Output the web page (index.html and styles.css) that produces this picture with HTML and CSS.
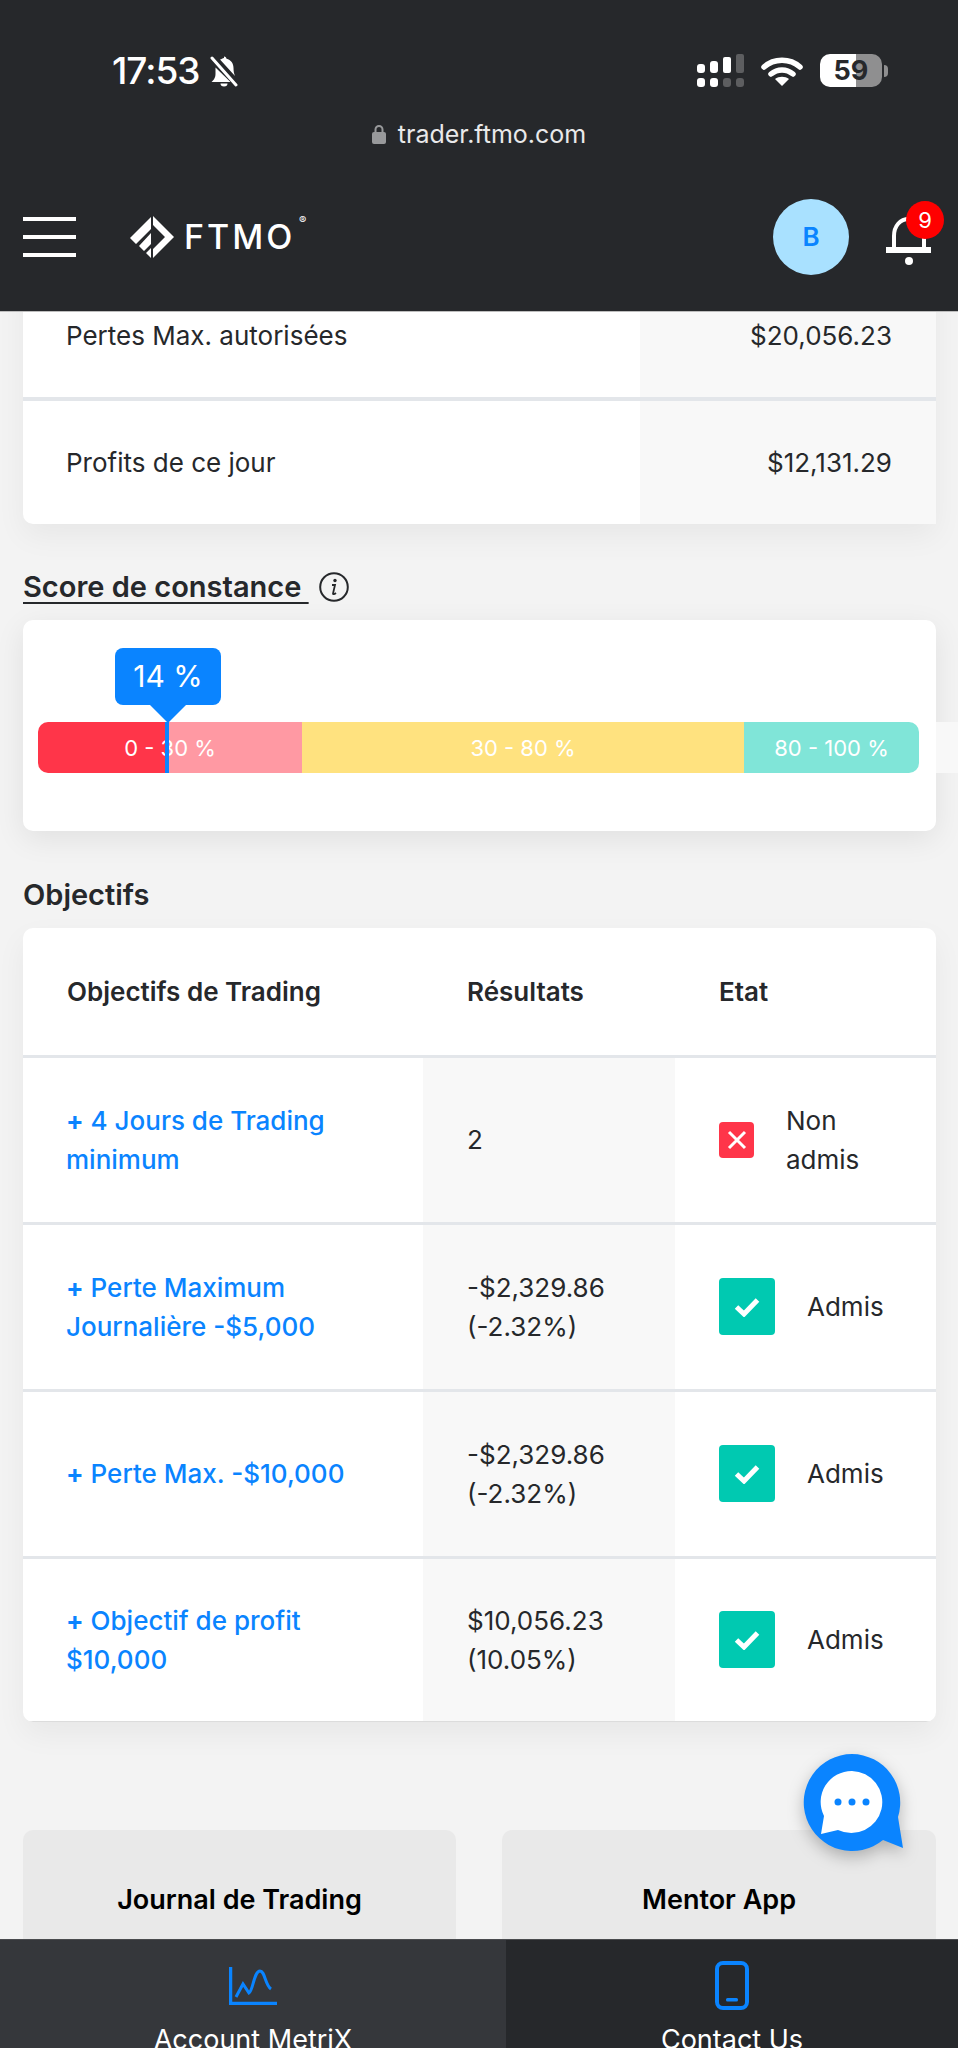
FILE: index.html
```html
<!DOCTYPE html>
<html>
<head>
  <title>FTMO Trader</title>
  <link rel="stylesheet" href="styles.css">
</head>
<body>
  <div class="page">
    <header class="top">
      <div class="status-bar">
        <div class="status-left">
          <span class="clock">17:53</span>
          <svg class="bell-off" viewBox="0 0 32 32" width="32" height="32">
            <path d="M15 1.5c1.5 0 2.5 1 2.5 2.3 4.5 1 7 4.600 7 9.200 0 3 .5 6 1.500 8l-15-16.500C12.500 4.500 13.500 3 15 3zM6.500 12.500 21.500 27H2.500c1.500-1.500 4-3.500 4-8z" fill="#fff"/>
            <path d="M11.500 28.500h7a3.500 3 0 0 1-7 0z" fill="#fff"/>
            <path d="M3 3l24 27" stroke="#fff" stroke-width="3" stroke-linecap="round"/>
          </svg>
        </div>
        <div class="status-right">
          <svg viewBox="0 0 47 33" width="47" height="33">
            <rect x="0" y="10" width="8" height="9" rx="3" fill="#fff"/>
            <rect x="13" y="7" width="8" height="12" rx="3" fill="#fff"/>
            <rect x="26" y="3" width="8" height="16" rx="2" fill="#fff"/>
            <rect x="39" y="0" width="8" height="19" rx="2" fill="#5d5e60"/>
            <rect x="0" y="24" width="8" height="9" rx="3" fill="#fff"/>
            <rect x="13" y="24" width="8" height="9" rx="3" fill="#fff"/>
            <rect x="26" y="24" width="8" height="9" rx="3" fill="#5d5e60"/>
            <rect x="39" y="24" width="8" height="9" rx="3" fill="#5d5e60"/>
          </svg>
          <svg class="wifi" viewBox="0 0 42 30" width="42" height="30">
            <path d="M3 11C13 2 29 2 39 11" fill="none" stroke="#fff" stroke-width="5.500" stroke-linecap="round"/>
            <path d="M10 18c6.500-5.500 15.500-5.500 22 0" fill="none" stroke="#fff" stroke-width="5.500" stroke-linecap="round"/>
            <path d="M21 30l-7-7c4-3 10-3 14 0z" fill="#fff"/>
          </svg>
          <div class="battery">
            <span class="battery-fill">59</span>
          </div>
          <span class="battery-tip"></span>
        </div>
      </div>
      <div class="url-bar">
        <svg viewBox="0 0 14 20" width="14" height="20">
          <path d="M3.500 9V5.500a3.500 3.500 0 0 1 7 0V9" fill="none" stroke="#98999b" stroke-width="2"/>
          <rect x="0" y="8" width="14" height="12" rx="2" fill="#98999b"/>
        </svg>
        <span>trader.ftmo.com</span>
      </div>
      <nav class="nav">
        <div class="nav-left">
          <div class="burger"><span></span><span></span><span></span></div>
          <div class="logo">
            <svg viewBox="0 0 44 42" width="44" height="42">
              <path d="M23 0 44 21 23 42V33L35 21 23 9z" fill="#fff"/>
              <path d="M21 1 0 22l6 6L21 13zM21 17 9 30l5 5 7-7zM21 32l-5 5 5 5z" fill="#fff"/>
            </svg>
            <span class="logo-text">FTMO</span>
            <span class="logo-reg">®</span>
          </div>
        </div>
        <div class="nav-right">
          <div class="avatar">B</div>
          <div class="bell">
            <svg viewBox="0 0 46 52" width="46" height="52">
              <path d="M8 34V22C8 12 14 5 23 5s15 7 15 17v12" fill="none" stroke="#fff" stroke-width="4"/>
              <rect x="0" y="33" width="45" height="6" fill="#fff"/>
              <circle cx="23" cy="47" r="4" fill="#fff"/>
            </svg>
            <span class="badge">9</span>
          </div>
        </div>
      </nav>
    </header>

    <main class="content">
      <table class="card stats-table">
        <tr>
          <td>Pertes Max. autorisées</td>
          <td class="shade amount">$20,056.23</td>
        </tr>
        <tr>
          <td>Profits de ce jour</td>
          <td class="shade amount">$12,131.29</td>
        </tr>
      </table>

      <h2 class="title title-score">
        <span class="underlined">Score de constance&nbsp;</span>
        <svg viewBox="0 0 30 30" width="30" height="30">
          <circle cx="15" cy="15" r="13.800" fill="none" stroke="#26282b" stroke-width="2"/>
          <circle cx="16" cy="8.500" r="1.700" fill="#26282b"/>
          <path d="M13 13h3l-2 8.500c0 1 1 1 3-.5" fill="none" stroke="#26282b" stroke-width="1.800"/>
        </svg>
      </h2>

      <section class="score-card">
        <div class="score-bar">
          <div class="seg seg-red">0 - 30 %</div>
          <div class="seg seg-yellow">30 - 80 %</div>
          <div class="seg seg-teal">80 - 100 %</div>
          <div class="marker"></div>
          <div class="score-tip">14 %</div>
        </div>
      </section>

      <h2 class="title title-goals">Objectifs</h2>

      <table class="card goals-table">
        <colgroup>
          <col class="col-goal">
          <col class="col-result">
          <col class="col-state">
        </colgroup>
        <tr class="head-row">
          <th>Objectifs de Trading</th>
          <th>Résultats</th>
          <th>Etat</th>
        </tr>
        <tr>
          <td class="goal"><b>+</b> 4 Jours de Trading<br>minimum</td>
          <td class="shade">2</td>
          <td>
            <div class="state state-no">
              <span class="state-box box-no">
                <svg viewBox="0 0 20 20" width="20" height="20"><path d="M2 2l16 16M18 2 2 18" stroke="#fff" stroke-width="3"/></svg>
              </span>
              <span>Non<br>admis</span>
            </div>
          </td>
        </tr>
        <tr>
          <td class="goal"><b>+</b> Perte Maximum<br>Journalière -$5,000</td>
          <td class="shade">-$2,329.86<br>(-2.32%)</td>
          <td>
            <div class="state">
              <span class="state-box box-ok">
                <svg viewBox="0 0 26 20" width="26" height="20"><path d="M2.500 10l7.500 7L23.500 3" fill="none" stroke="#fff" stroke-width="5"/></svg>
              </span>
              <span>Admis</span>
            </div>
          </td>
        </tr>
        <tr>
          <td class="goal"><b>+</b> Perte Max. -$10,000</td>
          <td class="shade">-$2,329.86<br>(-2.32%)</td>
          <td>
            <div class="state">
              <span class="state-box box-ok">
                <svg viewBox="0 0 26 20" width="26" height="20"><path d="M2.500 10l7.500 7L23.500 3" fill="none" stroke="#fff" stroke-width="5"/></svg>
              </span>
              <span>Admis</span>
            </div>
          </td>
        </tr>
        <tr>
          <td class="goal"><b>+</b> Objectif de profit<br>$10,000</td>
          <td class="shade">$10,056.23<br>(10.05%)</td>
          <td>
            <div class="state">
              <span class="state-box box-ok">
                <svg viewBox="0 0 26 20" width="26" height="20"><path d="M2.500 10l7.500 7L23.500 3" fill="none" stroke="#fff" stroke-width="5"/></svg>
              </span>
              <span>Admis</span>
            </div>
          </td>
        </tr>
      </table>

      <div class="links">
        <div class="link-card">Journal de Trading</div>
        <div class="link-card">Mentor App</div>
      </div>
    </main>

    <footer class="tabs">
      <div class="tab tab-active">
        <svg viewBox="0 0 48 38" width="48" height="38">
          <path d="M1.500 0v36.500H48" fill="none" stroke="#0a84ff" stroke-width="3.500"/>
          <path d="M7 30 14 17l6 9C24 24 25 4 31 4c5 0 5 14 11 18" fill="none" stroke="#0a84ff" stroke-width="3"/>
        </svg>
        <span>Account MetriX</span>
      </div>
      <div class="tab">
        <svg viewBox="0 0 34 49" width="34" height="49">
          <rect x="2" y="2" width="30" height="45" rx="6" fill="none" stroke="#0a84ff" stroke-width="4"/>
          <rect x="11" y="37" width="12" height="3.500" rx="1.500" fill="#0a84ff"/>
        </svg>
        <span>Contact Us</span>
      </div>
    </footer>

    <div class="chat-btn">
      <svg viewBox="0 0 100 100" width="100" height="100">
        <path d="M49 2a48.500 48.500 0 0 1 46 63l5 31-20-8A48.500 48.500 0 1 1 49 2z" fill="#0a84ff"/>
        <path d="M49 19a31 31 0 1 1-14 59l-17 4 3-18A31 31 0 0 1 49 19z" fill="#fff"/>
        <circle cx="35" cy="50" r="3.500" fill="#0a84ff"/>
        <circle cx="49" cy="50" r="3.500" fill="#0a84ff"/>
        <circle cx="63" cy="50" r="3.500" fill="#0a84ff"/>
      </svg>
    </div>
  </div>
</body>
</html>
```

FILE: styles.css
```css
* {
  box-sizing: border-box;
}

body {
  margin: 0;
  font-family: Inter, "Liberation Sans", sans-serif;
  color: #26282b;
  background: #f3f3f3;
}

.page {
  position: relative;
  width: 958px;
  height: 2048px;
  overflow: hidden;
  display: flex;
  flex-direction: column;
}

/* top dark area */
.top {
  flex: none;
  height: 312px;
  background: #26282b;
  color: #fff;
  border-bottom: 1px solid #bdbdbd;
}

.status-bar {
  height: 106px;
  padding: 54px 70px 0 112px;
  display: flex;
  justify-content: space-between;
  align-items: flex-start;
}

.status-left {
  display: flex;
  align-items: center;
  gap: 9px;
}

.clock {
  font-size: 37px;
  font-weight: 500;
  line-height: 34px;
  letter-spacing: -1px;
}

.status-right {
  display: flex;
  align-items: center;
}

.wifi {
  margin-left: 17px;
}

.battery {
  margin-left: 17px;
  width: 62px;
  height: 33px;
  border-radius: 10px;
  overflow: hidden;
  background: linear-gradient(to right, #fff 58%, #8f8f90 58%);
}

.battery-fill {
  display: block;
  text-align: center;
  font-size: 27px;
  font-weight: 700;
  line-height: 33px;
  color: #26282b;
}

.battery-tip {
  width: 4px;
  height: 12px;
  margin-left: 2px;
  border-radius: 0 4px 4px 0;
  background: #8f8f90;
}

.url-bar {
  height: 56px;
  display: flex;
  align-items: center;
  justify-content: center;
  gap: 12px;
  padding-right: 0;
  font-size: 25px;
  color: #e9e9ea;
}

.nav {
  height: 149px;
  padding: 0 14px 0 23px;
  display: flex;
  justify-content: space-between;
  align-items: center;
}

.nav-left {
  display: flex;
  align-items: center;
  gap: 54px;
}

.burger {
  width: 53px;
  display: flex;
  flex-direction: column;
  gap: 14px;
}

.burger span {
  height: 4px;
  background: #fff;
}

.logo {
  display: flex;
  align-items: center;
  position: relative;
}

.logo-text {
  margin-left: 10px;
  font-size: 34px;
  font-weight: 500;
  letter-spacing: 3px;
}

.logo-reg {
  position: absolute;
  right: -11px;
  top: -3px;
  font-size: 11px;
}

.nav-right {
  display: flex;
  align-items: center;
  gap: 37px;
}

.avatar {
  width: 76px;
  height: 76px;
  border-radius: 50%;
  background: #a9e1ff;
  color: #0a84ff;
  font-size: 26px;
  font-weight: 600;
  display: flex;
  align-items: center;
  justify-content: center;
}

.bell {
  position: relative;
  width: 46px;
  height: 52px;
  margin-right: 12px;
  margin-top: 6px;
}

.badge {
  position: absolute;
  right: -12px;
  top: -13px;
  width: 38px;
  height: 38px;
  border-radius: 50%;
  background: #f00;
  color: #fff;
  font-size: 22px;
  text-align: center;
  line-height: 38px;
}

/* scrolled content */
.content {
  flex: 1;
  min-height: 0;
  overflow: hidden;
  padding: 0 22px 0 23px;
  position: relative;
}

.card {
  width: 100%;
  background: #fff;
  border-collapse: collapse;
  table-layout: fixed;
  box-shadow: 0 12px 30px rgba(0, 0, 0, 0.05);
  border-radius: 0 0 0 10px;
  overflow: hidden;
}

.shade {
  background: #f8f8f8;
}

.stats-table {
  margin-top: -38px;
}

.stats-table td {
  height: 125px;
  padding: 0 44px 0 43px;
  font-size: 26px;
  border-bottom: 4px solid #e3e6ea;
}

.stats-table tr:last-child td {
  border-bottom: 0;
}

.stats-table td:first-child {
  width: 617px;
}

.amount {
  text-align: right;
}

.title {
  margin: 0;
  height: 40px;
  font-size: 29px;
  font-weight: 600;
  line-height: 40px;
}

.title-score {
  margin-top: 43px;
  margin-bottom: 13px;
  display: flex;
  align-items: center;
  gap: 10px;
}

.underlined {
  text-decoration: underline;
  text-underline-offset: 5px;
  text-decoration-thickness: 2px;
}

.score-card {
  height: 211px;
  background: #fff;
  border-radius: 10px;
  padding: 102px 16px 0 15px;
  box-shadow: 0 8px 30px rgba(0, 0, 0, 0.08);
}

.score-bar {
  position: relative;
  height: 51px;
  border-radius: 10px;
  display: flex;
  color: #fff;
  font-size: 22px;
}

/* the grey strip that runs out of the card on the right */
.score-bar::after {
  content: "";
  position: absolute;
  left: 100%;
  top: 0;
  width: 100px;
  height: 100%;
  margin-left: 16px;
  background: #f8f8f8;
}

.seg {
  display: flex;
  align-items: center;
  justify-content: center;
}

.seg-red {
  width: 264px;
  border-radius: 10px 0 0 10px;
  background: linear-gradient(to right, #ff3549 49%, #ff99a3 49%);
}

.seg-yellow {
  width: 442px;
  background: #ffe27f;
}

.seg-teal {
  width: 175px;
  border-radius: 0 10px 10px 0;
  background: #80e5d8;
}

.marker {
  position: absolute;
  left: 127px;
  top: 0;
  bottom: 0;
  width: 4px;
  background: #0a84ff;
}

.score-tip {
  position: absolute;
  left: 77px;
  top: -74px;
  width: 106px;
  height: 57px;
  border-radius: 8px;
  background: #0a84ff;
  font-size: 30px;
  line-height: 57px;
  text-align: center;
}

.score-tip::after {
  content: "";
  position: absolute;
  left: 35px;
  top: 100%;
  border-top: 18px solid #0a84ff;
  border-left: 18px solid transparent;
  border-right: 18px solid transparent;
}

.title-goals {
  margin-top: 44px;
  margin-bottom: 13px;
}

.goals-table {
  border-radius: 10px;
}

.col-goal {
  width: 400px;
}

.col-result {
  width: 252px;
}

.goals-table th {
  height: 128px;
  padding: 0 0 0 44px;
  font-size: 26px;
  font-weight: 600;
  text-align: left;
  border-bottom: 3px solid #e3e6ea;
}

.goals-table td {
  height: 167px;
  padding: 0 0 0 44px;
  font-size: 26px;
  line-height: 39px;
  border-bottom: 3px solid #e3e6ea;
}

.goals-table tr:last-child td {
  height: 164px;
  border-bottom: 1px solid #dcdcdc;
}

.goals-table .goal {
  padding-left: 43px;
  color: #0a84ff;
  font-weight: 500;
}

.state {
  display: flex;
  align-items: center;
  gap: 32px;
}

.state-no {
  gap: 32px;
}

.state-box {
  flex: none;
  width: 56px;
  height: 57px;
  border-radius: 4px;
  display: flex;
  align-items: center;
  justify-content: center;
}

.box-ok {
  background: #00c9b1;
}

.box-no {
  width: 35px;
  height: 36px;
  background: #ff3549;
}

.links {
  margin-top: 108px;
  display: grid;
  grid-template-columns: 433px 434px;
  gap: 46px;
}

.link-card {
  height: 140px;
  border-radius: 10px;
  background: #e9e9e9;
  color: #000;
  font-size: 27px;
  font-weight: 600;
  text-align: center;
  line-height: 140px;
}

/* bottom tabs */
.tabs {
  flex: none;
  height: 109px;
  display: flex;
  background: #26282b;
  color: #fff;
  overflow: hidden;
  border-top: 1px solid #4a4b4e;
}

.tab {
  flex: 0 0 452px;
  display: flex;
  flex-direction: column;
  align-items: center;
  justify-content: flex-start;
  height: 140px;
  font-size: 27px;
}

.tab-active {
  flex-basis: 506px;
  background: #35373b;
  padding-top: 27px;
  gap: 18px;
}

.tab:not(.tab-active) {
  padding-top: 21px;
  gap: 13px;
}

.chat-btn {
  position: absolute;
  left: 803px;
  top: 1752px;
  width: 100px;
  height: 100px;
  filter: drop-shadow(0 6px 8px rgba(0, 0, 0, 0.25));
}
```
